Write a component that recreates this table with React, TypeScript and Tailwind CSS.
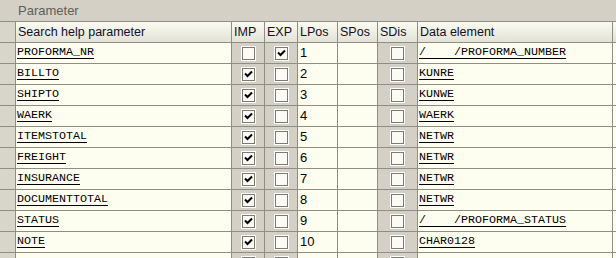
import React from "react"

type Row = {
  name: string
  imp: boolean
  exp: boolean
  lpos: string
  elem: string
}

const rows: Row[] = [
  { name: "PROFORMA_NR", imp: false, exp: true, lpos: "1", elem: "/    /PROFORMA_NUMBER" },
  { name: "BILLTO", imp: true, exp: false, lpos: "2", elem: "KUNRE" },
  { name: "SHIPTO", imp: true, exp: false, lpos: "3", elem: "KUNWE" },
  { name: "WAERK", imp: true, exp: false, lpos: "4", elem: "WAERK" },
  { name: "ITEMSTOTAL", imp: true, exp: false, lpos: "5", elem: "NETWR" },
  { name: "FREIGHT", imp: true, exp: false, lpos: "6", elem: "NETWR" },
  { name: "INSURANCE", imp: true, exp: false, lpos: "7", elem: "NETWR" },
  { name: "DOCUMENTTOTAL", imp: true, exp: false, lpos: "8", elem: "NETWR" },
  { name: "STATUS", imp: true, exp: false, lpos: "9", elem: "/    /PROFORMA_STATUS" },
  { name: "NOTE", imp: true, exp: false, lpos: "10", elem: "CHAR0128" },
]

const cols = "grid grid-cols-[16px_216px_33px_33px_40px_40px_40px_195px_1fr]"
const sans = "font-['Liberation_Sans',Tahoma,sans-serif]"
const mono = "font-['Liberation_Mono','Courier_New',monospace]"

function Check({ on }: { on: boolean }) {
  return (
    <div className="w-[15px] h-[15px] border border-white">
      <div className="w-full h-full border border-[#7a7a72] bg-[#fbfbf3] flex items-center justify-center">
        {on && (
          <svg width="9" height="8" viewBox="0 0 9 8">
            <path d="M1 3.5 L3.5 6 L8 1.5" stroke="#000" strokeWidth="2" fill="none" />
          </svg>
        )}
      </div>
    </div>
  )
}

function Sel() {
  return <div className="border-r border-b border-[#8e8e84] bg-[#d8d6ca]" />
}

function TxtCell({ text }: { text: string }) {
  return (
    <div className="border-r border-b border-[#8e8e84] bg-[#fefef0] pl-[1px] flex items-center">
      <span
        className={`${mono} text-[11.67px] leading-none text-black whitespace-pre underline underline-offset-[3px] decoration-1`}
      >
        {text}
      </span>
    </div>
  )
}

function CheckCell({ on }: { on: boolean }) {
  return (
    <div className="border-r border-b border-[#8e8e84] bg-[#d4d0c5] flex items-center justify-center">
      <Check on={on} />
    </div>
  )
}

function PlainCell({ text }: { text?: string }) {
  return (
    <div className={`border-r border-b border-[#8e8e84] bg-[#fefef0] pl-[2px] flex items-center ${sans} text-[13px] text-black`}>
      {text}
    </div>
  )
}

function Head({ label }: { label?: string }) {
  return (
    <div
      className={`border-r border-b border-[#8e8e84] bg-gradient-to-b from-[#fbfbf1] to-[#e3e2d6] pl-[2px] flex items-center ${sans} text-[12.5px] text-[#10102a]`}
    >
      {label}
    </div>
  )
}

export default function App() {
  return (
    <div className="w-[616px] h-[258px] overflow-hidden bg-[#d4d0c5]">
      <div className={`h-[21px] flex items-center pl-[18px] ${sans} text-[13px] text-[#5e5e5a]`}>Parameter</div>
      <div className={`${cols} grid-rows-[21px] auto-rows-[21px] border-t border-[#8e8e84] w-[700px]`}>
        <div className="border-r border-b border-[#8e8e84] bg-[#d8d6ca]" />
        <Head label="Search help parameter" />
        <Head label="IMP" />
        <Head label="EXP" />
        <Head label="LPos" />
        <Head label="SPos" />
        <Head label="SDis" />
        <Head label="Data element" />
        <Head />
        {rows.map((r) => (
          <React.Fragment key={r.name}>
            <Sel />
            <TxtCell text={r.name} />
            <CheckCell on={r.imp} />
            <CheckCell on={r.exp} />
            <PlainCell text={r.lpos} />
            <PlainCell />
            <CheckCell on={false} />
            <TxtCell text={r.elem} />
            <PlainCell />
          </React.Fragment>
        ))}
        <Sel />
        <PlainCell />
        <CheckCell on={false} />
        <CheckCell on={false} />
        <PlainCell />
        <PlainCell />
        <CheckCell on={false} />
        <PlainCell />
        <PlainCell />
      </div>
    </div>
  )
}
